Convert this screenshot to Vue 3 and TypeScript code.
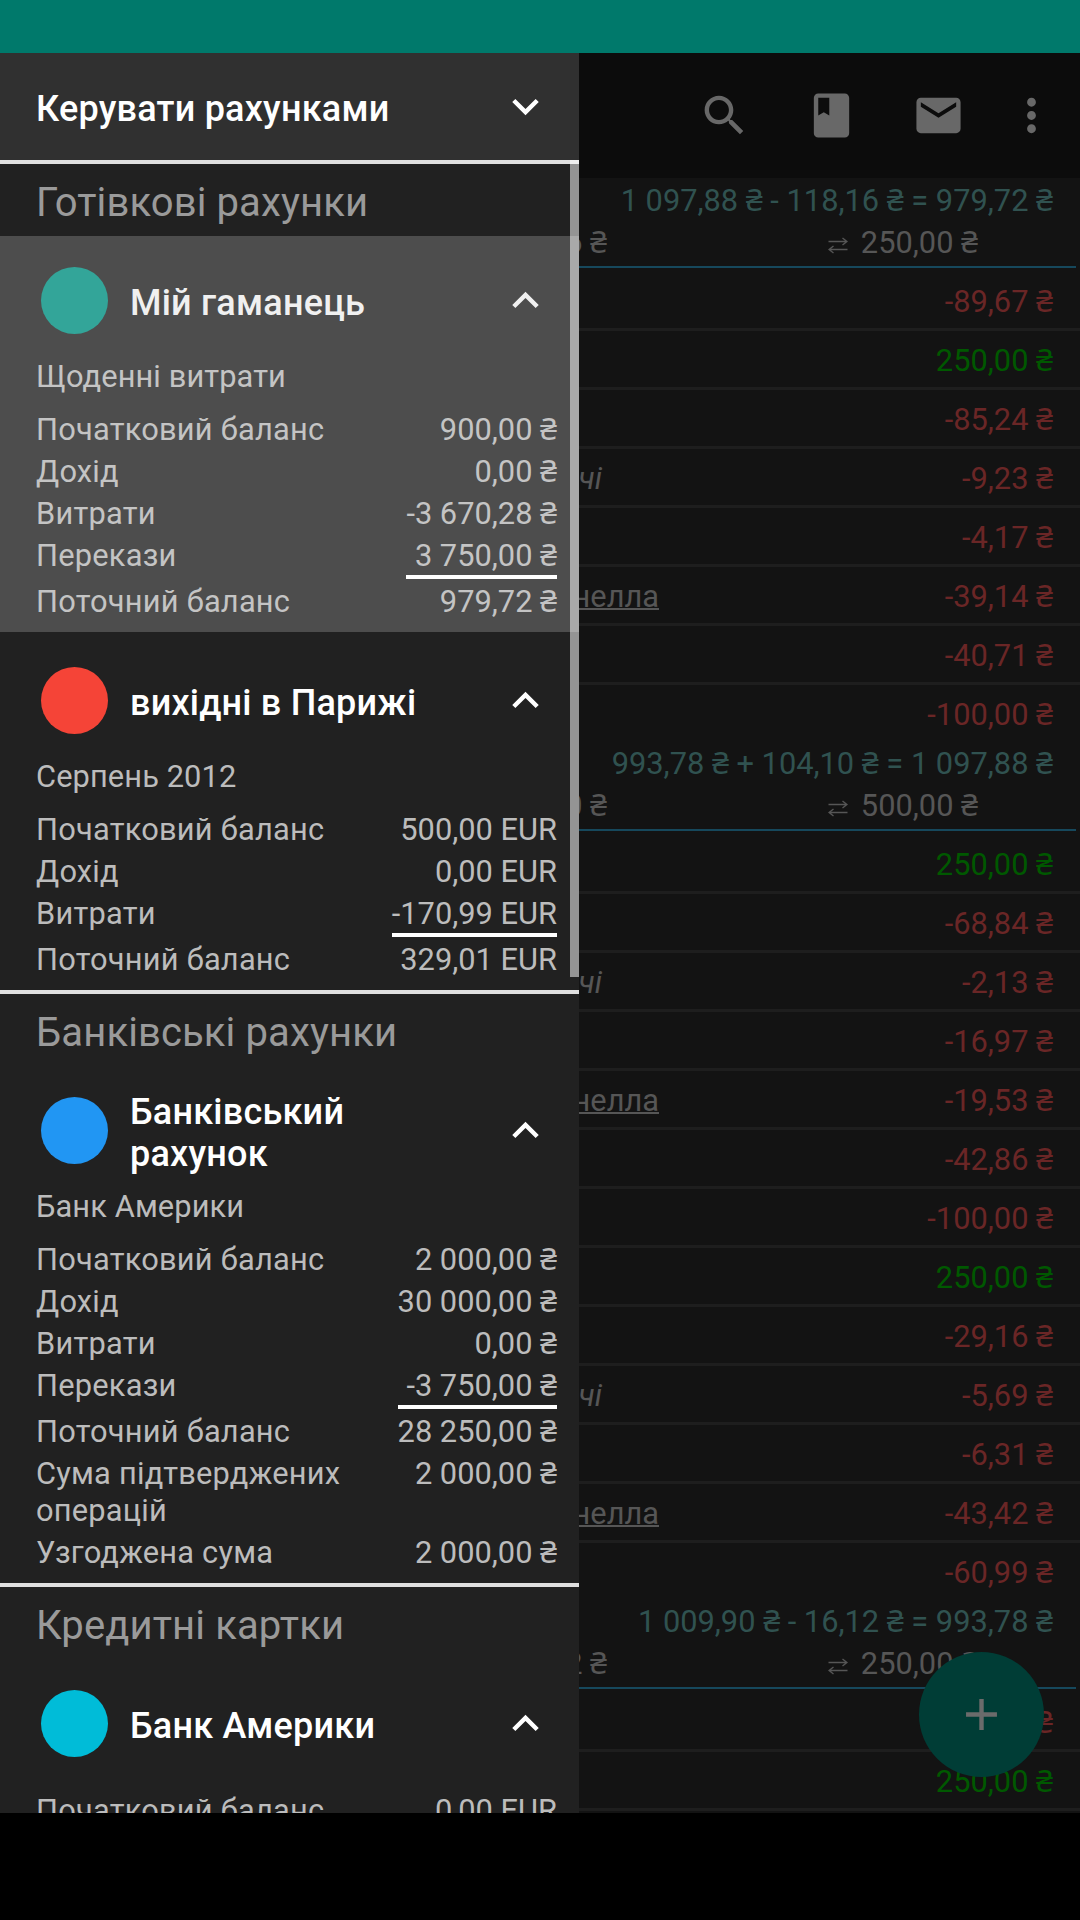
<script setup lang="ts">
interface BalanceLine { label: string; value: string; last?: boolean }
interface Account {
  name: string
  color: string
  description?: string
  selected?: boolean
  lines: BalanceLine[]
}
interface AccountGroup { title: string; accounts: Account[] }
interface Transaction { amount: string; category?: string; payee?: string }
interface Period { summary: string; expense: string; transfer: string; rows: Transaction[] }

const groups: AccountGroup[] = [
  {
    title: 'Готівкові рахунки',
    accounts: [
      {
        name: 'Мій гаманець', color: '#33a599', description: 'Щоденні витрати', selected: true,
        lines: [
          { label: 'Початковий баланс', value: '900,00 ₴' },
          { label: 'Дохід', value: '0,00 ₴' },
          { label: 'Витрати', value: '-3 670,28 ₴' },
          { label: 'Перекази', value: '3 750,00 ₴', last: true },
          { label: 'Поточний баланс', value: '979,72 ₴' },
        ],
      },
      {
        name: 'вихідні в Парижі', color: '#f54437', description: 'Серпень 2012',
        lines: [
          { label: 'Початковий баланс', value: '500,00 EUR' },
          { label: 'Дохід', value: '0,00 EUR' },
          { label: 'Витрати', value: '-170,99 EUR', last: true },
          { label: 'Поточний баланс', value: '329,01 EUR' },
        ],
      },
    ],
  },
  {
    title: 'Банківські рахунки',
    accounts: [
      {
        name: 'Банківський рахунок', color: '#2196f3', description: 'Банк Америки',
        lines: [
          { label: 'Початковий баланс', value: '2 000,00 ₴' },
          { label: 'Дохід', value: '30 000,00 ₴' },
          { label: 'Витрати', value: '0,00 ₴' },
          { label: 'Перекази', value: '-3 750,00 ₴', last: true },
          { label: 'Поточний баланс', value: '28 250,00 ₴' },
          { label: 'Сума підтверджених операцій', value: '2 000,00 ₴' },
          { label: 'Узгоджена сума', value: '2 000,00 ₴' },
        ],
      },
    ],
  },
  {
    title: 'Кредитні картки',
    accounts: [
      { name: 'Банк Америки', color: '#00bcd8', lines: [{ label: 'Початковий баланс', value: '0,00 EUR' }] },
    ],
  },
]

const periods: Period[] = [
  {
    summary: '1 097,88 ₴ - 118,16 ₴ = 979,72 ₴', expense: '6 ₴', transfer: '250,00 ₴',
    rows: [
      { amount: '-89,67 ₴' },
      { amount: '250,00 ₴' },
      { amount: '-85,24 ₴' },
      { amount: '-9,23 ₴', category: 'чі' },
      { amount: '-4,17 ₴' },
      { amount: '-39,14 ₴', payee: 'нелла' },
      { amount: '-40,71 ₴' },
      { amount: '-100,00 ₴' },
    ],
  },
  {
    summary: '993,78 ₴ + 104,10 ₴ = 1 097,88 ₴', expense: '0 ₴', transfer: '500,00 ₴',
    rows: [
      { amount: '250,00 ₴' },
      { amount: '-68,84 ₴' },
      { amount: '-2,13 ₴', category: 'чі' },
      { amount: '-16,97 ₴' },
      { amount: '-19,53 ₴', payee: 'нелла' },
      { amount: '-42,86 ₴' },
      { amount: '-100,00 ₴' },
      { amount: '250,00 ₴' },
      { amount: '-29,16 ₴' },
      { amount: '-5,69 ₴', category: 'чі' },
      { amount: '-6,31 ₴' },
      { amount: '-43,42 ₴', payee: 'нелла' },
      { amount: '-60,99 ₴' },
    ],
  },
  {
    summary: '1 009,90 ₴ - 16,12 ₴ = 993,78 ₴', expense: '2 ₴', transfer: '250,00 ₴',
    rows: [{ amount: '-16,12 ₴' }, { amount: '250,00 ₴' }, { amount: '' }],
  },
]

const toolbarIcons: string[] = [
  'M15.5 14h-.79l-.28-.27C15.41 12.59 16 11.11 16 9.5 16 5.91 13.09 3 9.5 3S3 5.91 3 9.5 5.91 16 9.5 16c1.61 0 3.09-.59 4.23-1.57l.27.28v.79l5 4.99L20.49 19l-4.99-5zm-6 0C7.01 14 5 11.99 5 9.5S7.01 5 9.5 5 14 7.01 14 9.5 11.99 14 9.5 14z',
  'M18 2H6c-1.1 0-2 .9-2 2v16c0 1.1.9 2 2 2h12c1.1 0 2-.9 2-2V4c0-1.1-.9-2-2-2zM6 4h5v8l-2.5-1.5L6 12V4z',
  'M20 4H4c-1.1 0-1.99.9-1.99 2L2 18c0 1.1.9 2 2 2h16c1.1 0 2-.9 2-2V6c0-1.1-.9-2-2-2zm0 4l-8 5-8-5V6l8 5 8-5v2z',
  'M12 8c1.1 0 2-.9 2-2s-.9-2-2-2-2 .9-2 2 .9 2 2 2zm0 2c-1.1 0-2 .9-2 2s.9 2 2 2 2-.9 2-2-.9-2-2-2zm0 6c-1.1 0-2 .9-2 2s.9 2 2 2 2-.9 2-2-.9-2-2-2z',
]
</script>

<template>
  <div class="screen">
    <div class="status-bar"></div>
    <div class="body">
      <aside class="drawer">
        <header class="drawer-header">
          <span class="name">Керувати рахунками</span>
          <svg class="chevron" viewBox="0 0 24 24"><path d="M16.59 8.59L12 13.17 7.41 8.59 6 10l6 6 6-6z" /></svg>
        </header>
        <section v-for="group in groups" :key="group.title" class="group">
          <h2 class="group-title">{{ group.title }}</h2>
          <article
            v-for="account in group.accounts"
            :key="account.name"
            class="account"
            :class="{ selected: account.selected }"
          >
            <div class="account-head">
              <span class="dot" :style="{ background: account.color }"></span>
              <span class="name">{{ account.name }}</span>
              <svg class="chevron" viewBox="0 0 24 24"><path d="M12 8l-6 6 1.41 1.41L12 10.83l4.59 4.58L18 14z" /></svg>
            </div>
            <p v-if="account.description" class="description">{{ account.description }}</p>
            <div class="balances" :class="{ bare: !account.description }">
              <template v-for="line in account.lines" :key="line.label">
                <span class="label">{{ line.label }}</span>
                <span class="value" :class="{ last: line.last }">{{ line.value }}</span>
              </template>
            </div>
          </article>
        </section>
        <div class="scrollbar"></div>
      </aside>

      <main class="content">
        <nav class="toolbar">
          <svg v-for="(icon, i) in toolbarIcons" :key="i" viewBox="0 0 24 24"><path :d="icon" /></svg>
        </nav>
        <section v-for="period in periods" :key="period.summary" class="period">
          <header class="period-head">
            <div class="summary">{{ period.summary }}</div>
            <div class="sums">
              <span class="expense">{{ period.expense }}</span>
              <span class="transfer">
                <svg viewBox="0 0 20 18"><path d="M.5 5.5H19M14.500 2l4.500 3.500-4.500 3.500M19.500 13.500H1M5.500 10l-4.500 3.500 4.500 3.500" /></svg>
                {{ period.transfer }}
              </span>
            </div>
          </header>
          <div v-for="(row, i) in period.rows" :key="i" class="row">
            <span v-if="row.category" class="category">{{ row.category }}</span>
            <span v-if="row.payee" class="payee">{{ row.payee }}</span>
            <span class="amount" :class="{ income: !row.amount.startsWith('-') }">{{ row.amount }}</span>
          </div>
        </section>
        <button class="fab"><svg viewBox="0 0 24 24"><path d="M19 13h-6v6h-2v-6H5v-2h6V5h2v6h6z" /></svg></button>
      </main>
    </div>
    <div class="nav-bar"></div>
  </div>
</template>

<style>
body { margin: 0; background: #000; }
</style>

<style scoped>
.screen {
  width: 1080px; height: 1920px; overflow: hidden;
  display: flex; flex-direction: column; background: #000;
  font: 30.8px/37px Roboto, "Noto Sans", sans-serif;
}
.status-bar { height: 53px; flex: none; background: #00796b; }
.body { display: flex; height: 1760px; flex: none; overflow: hidden; }
.nav-bar { flex: 1; background: #000; }

.drawer { position: relative; width: 579px; flex: none; overflow: hidden; background: #212121; color: #bcbcbc; }
.drawer-header {
  height: 107px; box-sizing: content-box; border-bottom: 4px solid #e0e0e0; background: #303030;
  display: flex; align-items: center; padding: 0 27px 0 36px; color: #fff;
}
.name { flex: 1; padding-top: 5px; font-size: 36px; line-height: 42px; font-weight: 500; letter-spacing: .22px; color: #fff; }
.chevron { width: 53px; height: 53px; flex: none; fill: #fff; }
.group-title {
  margin: 0; padding: 15px 36px 10px; font-size: 40px; line-height: 47px; font-weight: 400; letter-spacing: .12px; color: #9a9a9a;
}
.account { padding: 0 22px 12px 36px; border-bottom: 4px solid #212121; }
.account:last-child { border-bottom-color: #e0e0e0; }
.account.selected { background: #4d4d4d; background-clip: padding-box; color: #c4c4c4; }
.selected .name { color: #f0f0f0; }
.selected .chevron { fill: #f0f0f0; }
.account-head { display: flex; align-items: center; height: 129px; margin: 0 5px -7px; }
.dot { width: 67px; height: 67px; border-radius: 50%; margin-right: 22px; flex: none; }
.account-head .name { padding-right: 80px; }
.description { margin: 0; letter-spacing: .1px; }
.balances { display: grid; grid-template-columns: 1fr auto; align-items: start; padding-top: 16px; }
.balances.bare { padding-top: 11px; }
.label { margin-bottom: 5px; padding-right: 30px; letter-spacing: .22px; }
.value { margin-bottom: 5px; text-align: right; white-space: nowrap; }
.value.last { padding-bottom: 1px; border-bottom: 4px solid #fff; margin-bottom: 4px; }
.label:nth-last-child(2), .value:last-child { margin-bottom: 0; }
.scrollbar { position: absolute; top: 107px; right: 0; width: 9px; height: 817px; background: rgba(255, 255, 255, .52); }

.content { position: relative; flex: 1; min-width: 0; overflow: hidden; background: #131313; color: #565656; }
.toolbar { height: 125px; display: flex; align-items: center; justify-content: flex-end; gap: 54px; padding-right: 22px; background: #0c0c0c; }
.toolbar svg { width: 53px; height: 53px; fill: #686868; }
.toolbar svg:last-child { margin-left: -14px; }
.period-head { height: 84px; padding-top: 4px; border-bottom: 2px solid #16485c; margin: 0 4px 4px 0; }
.summary { text-align: right; padding-right: 23px; color: #305250; white-space: nowrap; margin-bottom: 5px; }
.sums { display: flex; justify-content: space-between; padding-right: 98px; white-space: nowrap; }
.expense { width: 28px; display: flex; justify-content: flex-end; }
.transfer { display: flex; }
.transfer svg { width: 20px; height: 18px; margin: 12px 13px 0 0; fill: none; stroke: #565656; stroke-width: 1.4; }
.row { display: flex; height: 45px; padding: 11px 27px 0 0; border-bottom: 3px solid #1e1e1e; }
.row:last-child { border-bottom: 0; }
.category { width: 23px; display: flex; justify-content: flex-end; font-style: italic; }
.payee { width: 80px; display: flex; justify-content: flex-end; text-decoration: underline; text-decoration-thickness: 2px; }
.amount { margin-left: auto; color: #6a2626; }
.amount.income { color: #005800; }
.fab {
  position: absolute; right: 36px; bottom: 36px; width: 125px; height: 125px; padding: 0; border: 0; border-radius: 50%;
  background: #003d36; display: flex; align-items: center; justify-content: center;
}
.fab svg { width: 53px; height: 53px; fill: #6b6b6b; }
</style>
